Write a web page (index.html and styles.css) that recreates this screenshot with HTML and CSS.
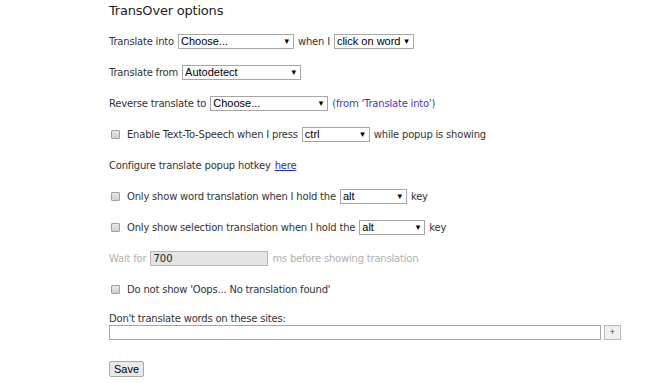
FILE: index.html
```html
<!DOCTYPE html>
<html lang="en">
<head>
    <meta charset="UTF-8">
    <title>TransOver options</title>
    <link rel="stylesheet" href="styles.css">
</head>
<body>
    <div class="options">
        <h1 class="title">TransOver options</h1>

        <div class="row">
            Translate into
            <span class="pick w116"><select><option>Choose...</option></select></span>
            when I
            <span class="pick w80"><select><option>click on word</option></select></span>
        </div>

        <div class="row">
            Translate from
            <span class="pick w119"><select><option>Autodetect</option></select></span>
        </div>

        <div class="row">
            Reverse translate to
            <span class="pick w118"><select><option>Choose...</option></select></span>
            <span class="hint">(from 'Translate into')</span>
        </div>

        <div class="row">
            <input type="checkbox" class="check">
            Enable Text-To-Speech when I press
            <span class="pick w68"><select><option>ctrl</option></select></span>
            while popup is showing
        </div>

        <div class="row">
            Configure translate popup hotkey <a href="#" class="link">here</a>
        </div>

        <div class="row">
            <input type="checkbox" class="check">
            Only show word translation when I hold the
            <span class="pick w67"><select><option>alt</option></select></span>
            key
        </div>

        <div class="row">
            <input type="checkbox" class="check">
            Only show selection translation when I hold the
            <span class="pick w66"><select><option>alt</option></select></span>
            key
        </div>

        <div class="row muted">
            Wait for
            <input type="text" class="delay" value="700" disabled>
            ms before showing translation
        </div>

        <div class="row">
            <input type="checkbox" class="check">
            Do not show 'Oops... No translation found'
        </div>

        <div class="sites">
            <div class="sites-label">Don't translate words on these sites:</div>
            <div class="sites-line">
                <input type="text" class="sites-input">
                <button class="plus">+</button>
            </div>
        </div>

        <button class="save">Save</button>
    </div>
</body>
</html>
```

FILE: styles.css
```css
body {
    margin: 0;
    background-color: #ffffff;
    color: #333333;
    font-family: "DejaVu Sans", Verdana, sans-serif;
    font-size: 10px;
    letter-spacing: -0.2px;
}
.options {
    padding-left: 109px;
    width: 520px;
}
.title {
    margin: 0;
    height: 26px;
    line-height: 22px;
    font-size: 13px;
    font-weight: normal;
    color: #222222;
}
.row {
    display: flex;
    align-items: center;
    gap: 4px;
    height: 31px;
    white-space: nowrap;
}
.pick {
    position: relative;
    display: inline-block;
    height: 15px;
    letter-spacing: 0;
}
.pick select {
    -webkit-appearance: none;
    appearance: none;
    width: 100%;
    height: 15px;
    margin: 0;
    padding: 0 0 0 2px;
    border: 1px solid #a6a6a6;
    border-radius: 0;
    background-color: #ffffff;
    color: #000000;
    font-family: "Liberation Sans", Arial, sans-serif;
    font-size: 11px;
    line-height: 13px;
}
.pick::after {
    content: "\25BE";
    position: absolute;
    right: 5px;
    top: 0;
    line-height: 15px;
    font-size: 9px;
    color: #000000;
    pointer-events: none;
}
.w116 { width: 116px; }
.w80 { width: 80px; }
.w119 { width: 119px; }
.w118 { width: 118px; }
.w68 { width: 68px; }
.w67 { width: 67px; }
.w66 { width: 66px; }
.hint {
    color: #3b3bc4;
}
.link {
    color: #2a2ad0;
    text-decoration: underline;
}
.check {
    -webkit-appearance: none;
    appearance: none;
    width: 9px;
    height: 9px;
    margin: 0 3px 0 2px;
    border: 1px solid #a0a0a0;
    border-radius: 1px;
    background: linear-gradient(#e8e8e8, #cfcfcf);
}
.muted {
    color: #b0b0b0;
}
.delay {
    width: 118px;
    height: 15px;
    box-sizing: border-box;
    margin: 0;
    padding: 0 2px;
    border: 1px solid #b8b8b8;
    background-color: #e4e4e4;
    color: #222222;
    font-family: "DejaVu Sans", Verdana, sans-serif;
    font-size: 10px;
}
.sites {
    padding-top: 7px;
}
.sites-label {
    line-height: 13px;
}
.sites-line {
    display: flex;
    gap: 3px;
}
.sites-input {
    width: 492px;
    height: 15px;
    box-sizing: border-box;
    margin: 0;
    border: 1px solid #a6a6a6;
}
.plus {
    width: 17px;
    height: 15px;
    padding: 0;
    margin: 0;
    border: 1px solid #b8b8b8;
    background-color: #efefef;
    color: #444444;
    font-size: 9px;
    line-height: 13px;
}
.save {
    margin-top: 21px;
    height: 16px;
    padding: 0 4px;
    border: 1px solid #a8a8a8;
    border-radius: 2px;
    background-color: #e9e9e9;
    color: #000000;
    font-family: "Liberation Sans", Arial, sans-serif;
    font-size: 11px;
    line-height: 13px;
}
```
